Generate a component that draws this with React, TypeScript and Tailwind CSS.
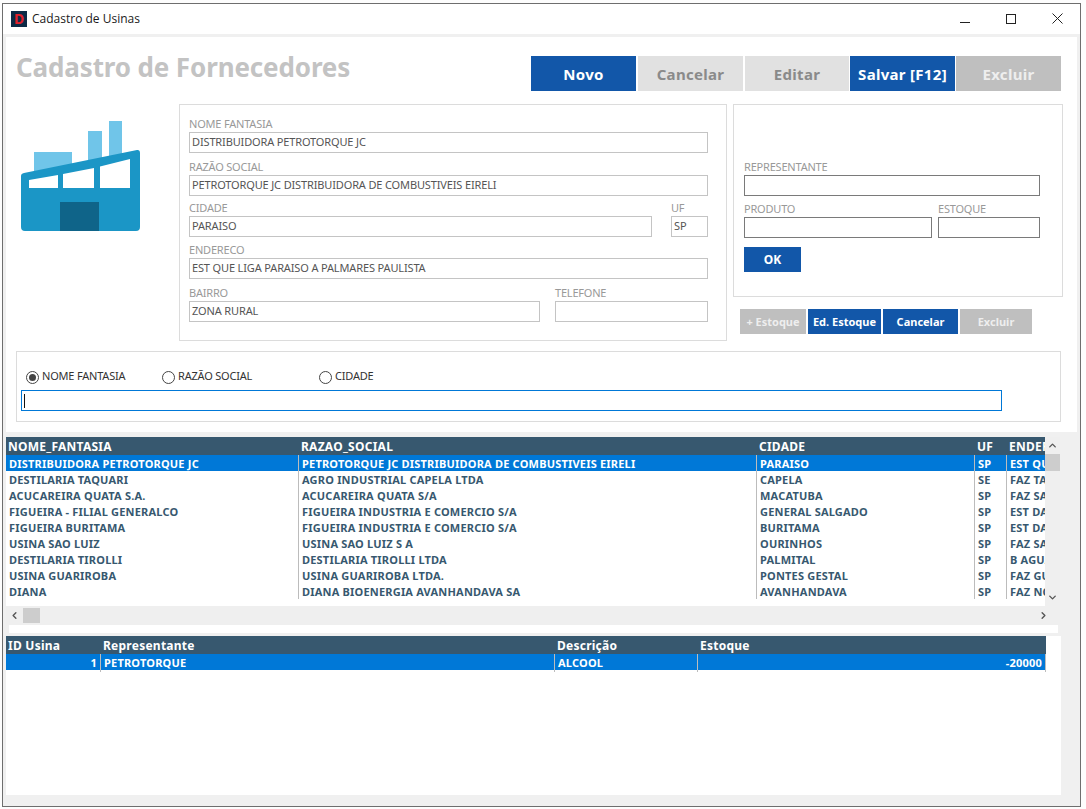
import React from "react";
import { ChevronUp, ChevronDown, ChevronLeft, ChevronRight } from "lucide-react";

const ui = "font-['Noto_Sans','Open_Sans',sans-serif]";

function Btn({ label, w, blue, light, big }: { label: string; w: string; blue?: boolean; light?: boolean; big?: boolean }) {
  const color = blue ? "bg-[#1257a9] text-white" : light ? "bg-[#e1e1e1] text-[#8a8a8a]" : "bg-[#bfbfbf] text-[#eeeeee]";
  const size = big ? "h-[35px] text-[15px] tracking-[0.3px]" : "h-[25px] text-[11px]";
  return (
    <div className={`${w} ${size} ${color} pt-[1px] flex items-center justify-center font-bold shrink-0`}>{label}</div>
  );
}

function Field({ label, w, value, dark, h = "h-[21px]" }: { label: string; w: string; value?: string; dark?: boolean; h?: string }) {
  return (
    <div className={`${w} flex flex-col shrink-0`}>
      <div className="h-[21px] leading-[26px] text-[11px] tracking-[-0.2px] text-[#999999] whitespace-nowrap">{label}</div>
      <div className={`${h} border ${dark ? "border-[#7a7a7a]" : "border-[#c4c4c4]"} pl-[2px] text-[11px] tracking-[-0.14px] leading-[18px] text-[#555555] whitespace-nowrap overflow-hidden`}>
        {value}
      </div>
    </div>
  );
}

function Radio({ label, w, on }: { label: string; w: string; on?: boolean }) {
  return (
    <div className={`${w} flex items-center gap-[3px] text-[11px] tracking-[-0.2px] text-[#333333] shrink-0`}>
      <span className="w-[13px] h-[13px] rounded-full border border-[#444444] flex items-center justify-center">
        {on && <span className="w-[7px] h-[7px] rounded-full bg-[#444444]" />}
      </span>
      <span className="-mt-[2px]">{label}</span>
    </div>
  );
}

const rows = [
  ["DISTRIBUIDORA PETROTORQUE JC", "PETROTORQUE JC DISTRIBUIDORA DE COMBUSTIVEIS EIRELI", "PARAISO", "SP", "EST QUE LIGA"],
  ["DESTILARIA TAQUARI", "AGRO INDUSTRIAL CAPELA LTDA", "CAPELA", "SE", "FAZ TAQUARI"],
  ["ACUCAREIRA QUATA S.A.", "ACUCAREIRA QUATA S/A", "MACATUBA", "SP", "FAZ SANTA"],
  ["FIGUEIRA - FILIAL GENERALCO", "FIGUEIRA INDUSTRIA E COMERCIO S/A", "GENERAL SALGADO", "SP", "EST DA"],
  ["FIGUEIRA BURITAMA", "FIGUEIRA INDUSTRIA E COMERCIO S/A", "BURITAMA", "SP", "EST DA"],
  ["USINA SAO LUIZ", "USINA SAO LUIZ S A", "OURINHOS", "SP", "FAZ SAO"],
  ["DESTILARIA TIROLLI", "DESTILARIA TIROLLI LTDA", "PALMITAL", "SP", "B AGUA"],
  ["USINA GUARIROBA", "USINA GUARIROBA LTDA.", "PONTES GESTAL", "SP", "FAZ GUA"],
  ["DIANA", "DIANA BIOENERGIA AVANHANDAVA SA", "AVANHANDAVA", "SP", "FAZ NOVA"],
];

const cols1 = "grid-cols-[293px_458px_218px_32px_38px]";
const cols2 = "grid-cols-[95px_454px_143px_348px]";

function Factory() {
  return (
    <svg width="120" height="111" viewBox="21 121 120 111" className="shrink-0">
      <path d="M34 152H72V168L34 175Z M88 131H102V162L88 165Z M109 121H122V158L109 161Z" fill="#70c5e9" />
      <path d="M24 173L137 150Q140 149.600 140 153V227Q140 231 136 231H25Q21 231 21 227V176Q21 173.500 24 173Z" fill="#1b96c6" />
      <path d="M29 180L58 175V188H29Z M63 174L94 168V188H63Z M100 166.500L130 159V188H100Z" fill="#ffffff" />
      <path d="M60 202H99V231H60Z" fill="#0f6489" />
    </svg>
  );
}

export default function App() {
  return (
    <div className={`w-[1086px] h-[809px] bg-[#fdfdfd] pl-[2px] pt-[3px] overflow-hidden ${ui}`}>
      <div className="w-[1079px] h-[804px] border border-[#6e6e6e] bg-[#f0f0f0] flex flex-col">
        {/* title bar */}
        <div className="h-[30px] bg-white flex items-center shrink-0 pl-[8px]">
          <div className="w-[16px] h-[16px] bg-[#0c2a45] flex items-center justify-center text-[#e0202a] text-[14px] font-bold leading-none">D</div>
          <div className="ml-[5px] text-[12px] text-[#1a1a1a] font-['Open_Sans',sans-serif]">Cadastro de Usinas</div>
          <div className="ml-auto flex items-center h-full">
            <svg width="46" height="30" viewBox="0 0 46 30"><path d="M18 18.500H28" stroke="#222222" strokeWidth="1" /></svg>
            <svg width="46" height="30" viewBox="0 0 46 30"><rect x="18.500" y="10.500" width="9" height="9" fill="none" stroke="#222222" /></svg>
            <svg width="46" height="30" viewBox="0 0 46 30"><path d="M18.500 9.500L28.500 19.500M28.500 9.500L18.500 19.500" stroke="#222222" /></svg>
          </div>
        </div>
        <div className="h-[3px] shrink-0" />

        {/* client */}
        <div className="flex-1 pl-[3px] pr-[3px] flex flex-col min-h-0">
          {/* upper white form */}
          <div className="h-[395px] bg-white shrink-0 pl-[10px] flex flex-col">
            <div className="h-[67px] flex shrink-0">
              <div className="w-[515px] pt-[11px] text-[26px] tracking-[-0.13px] leading-[38px] font-bold text-[#c3c3c3] whitespace-nowrap">Cadastro de Fornecedores</div>
              <div className="pt-[19px] flex h-fit">
                <Btn big blue label="Novo" w="w-[105px]" />
                <div className="w-[2px]" />
                <Btn big light label="Cancelar" w="w-[105px]" />
                <div className="w-[2px]" />
                <Btn big light label="Editar" w="w-[104px]" />
                <div className="w-[1px]" />
                <Btn big blue label="Salvar [F12]" w="w-[105px]" />
                <div className="w-[1px]" />
                <Btn big label="Excluir" w="w-[105px]" />
              </div>
            </div>

            <div className="flex h-[237px] shrink-0">
              <div className="w-[163px] pl-[5px] pt-[17px] shrink-0">
                <Factory />
              </div>
              <div className="w-[548px] h-[237px] border border-[#dcdcdc] pl-[9px] shrink-0 flex flex-col text-[#555555]">
                <div className="h-[6px] shrink-0" />
                <Field label="NOME FANTASIA" w="w-[519px]" value="DISTRIBUIDORA PETROTORQUE JC" />
                <div className="h-[1px] shrink-0" />
                <Field label="RAZÃO SOCIAL" w="w-[519px]" value="PETROTORQUE JC DISTRIBUIDORA DE COMBUSTIVEIS EIRELI" />
                <div className="flex -mt-px">
                  <Field label="CIDADE" w="w-[463px]" value="PARAISO" />
                  <div className="w-[19px] shrink-0" />
                  <Field label="UF" w="w-[37px]" value="SP" />
                </div>
                <Field label="ENDERECO" w="w-[519px]" value="EST QUE LIGA PARAISO A PALMARES PAULISTA" />
                <div className="flex mt-px">
                  <Field label="BAIRRO" w="w-[351px]" value="ZONA RURAL" />
                  <div className="w-[15px] shrink-0" />
                  <Field label="TELEFONE" w="w-[153px]" />
                </div>
              </div>
              <div className="ml-[6px] w-[330px] shrink-0 flex flex-col">
                <div className="h-[193px] border border-[#dcdcdc] pl-[10px] flex flex-col">
                  <div className="h-[49px] shrink-0" />
                  <Field dark label="REPRESENTANTE" w="w-[296px]" />
                  <div className="flex">
                    <Field dark label="PRODUTO" w="w-[188px]" />
                    <div className="w-[6px] shrink-0" />
                    <Field dark label="ESTOQUE" w="w-[102px]" />
                  </div>
                  <div className="mt-[9px] w-[57px] h-[25px] bg-[#1257a9] text-white text-[12px] font-bold flex items-center justify-center">OK</div>
                </div>
                <div className="mt-[12px] ml-[7px] flex gap-[2px]">
                  <Btn label="+ Estoque" w="w-[66px]" />
                  <Btn blue label="Ed. Estoque" w="w-[73px]" />
                  <Btn blue label="Cancelar" w="w-[75px]" />
                  <Btn label="Excluir" w="w-[72px]" />
                </div>
              </div>
            </div>

            <div className="mt-[10px] w-[1045px] h-[71px] border border-[#dcdcdc] pl-[4px] pt-[17px] shrink-0">
              <div className="flex pl-[5px] h-[16px] items-center">
                <Radio on label="NOME FANTASIA" w="w-[136px]" />
                <Radio label="RAZÃO SOCIAL" w="w-[157px]" />
                <Radio label="CIDADE" w="w-[100px]" />
              </div>
              <div className="mt-[5px] w-[981px] h-[21px] border border-[#0078d7] pl-[2px] flex items-center">
                <span className="w-px h-[14px] bg-[#111111]" />
              </div>
            </div>
          </div>

          {/* lower gray */}
          <div className="flex-1 min-h-0 flex flex-col pt-[5px] pb-[11px]">
            <div className="flex shrink-0">
              <div className="w-[1039px] bg-white overflow-hidden">
                <div className={`grid ${cols1} h-[18px] bg-[#37586f] text-white font-bold text-[12px] tracking-[0.25px] leading-[20px] overflow-hidden`}>
                  {["NOME_FANTASIA", "RAZAO_SOCIAL", "CIDADE", "UF", "ENDEREÇO"].map((h) => (
                    <div key={h} className="pl-[2px] whitespace-nowrap overflow-hidden">{h}</div>
                  ))}
                </div>
                {rows.map((r, i) => (
                  <div key={i} className={`grid ${cols1} h-[16px] text-[11px] tracking-[0.2px] leading-[18px] font-bold ${i === 0 ? "bg-[#0078d7] text-white" : "bg-white text-[#37586f]"}`}>
                    {r.map((c, j) => (
                      <div key={j} className={`pl-[3px] whitespace-nowrap overflow-hidden ${j < 4 ? "border-r border-[#bcbcbc]" : ""}`}>{c}</div>
                    ))}
                  </div>
                ))}
                <div className="h-[7px]" />
              </div>
              <div className="w-[15px] h-[169px] bg-[#efefef] shrink-0 flex flex-col items-center text-[#555555]">
                <div className="h-[17px] w-full flex items-center justify-center"><ChevronUp size={11} strokeWidth={3} /></div>
                <div className="h-[17px] w-full bg-[#cdcdcd]" />
                <div className="flex-1" />
                <div className="h-[17px] w-full flex items-center justify-center"><ChevronDown size={11} strokeWidth={3} /></div>
              </div>
            </div>
            <div className="h-[19px] w-[1054px] flex items-center bg-[#efefef] shrink-0 text-[#555555]">
              <div className="w-[17px] flex justify-center"><ChevronLeft size={11} strokeWidth={3} /></div>
              <div className="w-[17px] h-[15px] bg-[#cdcdcd]" />
              <div className="flex-1" />
              <div className="w-[22px] flex justify-start"><ChevronRight size={11} strokeWidth={3} /></div>
            </div>
            <div className="ml-[3px] w-[1049px] h-[8px] bg-white shrink-0" />
            <div className="h-[3px] shrink-0" />
            <div className="flex-1 w-[1055px] bg-white min-h-0">
              <div className="w-[1040px]">
                <div className={`grid ${cols2} h-[18px] bg-[#37586f] text-white font-bold text-[12px] tracking-[0.25px] leading-[20px]`}>
                  {["ID Usina", "Representante", "Descrição", "Estoque"].map((h) => (
                    <div key={h} className="pl-[2px] whitespace-nowrap overflow-hidden">{h}</div>
                  ))}
                </div>
                <div className={`grid ${cols2} h-[16px] bg-[#0078d7] text-white font-bold text-[11px] tracking-[0.2px] leading-[18px]`}>
                  <div className="pr-[3px] text-right border-r border-[#bcbcbc]">1</div>
                  <div className="pl-[3px] border-r border-[#bcbcbc]">PETROTORQUE</div>
                  <div className="pl-[3px] border-r border-[#bcbcbc]">ALCOOL</div>
                  <div className="pr-[3px] text-right border-r border-[#bcbcbc]">-20000</div>
                </div>
              </div>
            </div>
          </div>
        </div>
      </div>
    </div>
  );
}
